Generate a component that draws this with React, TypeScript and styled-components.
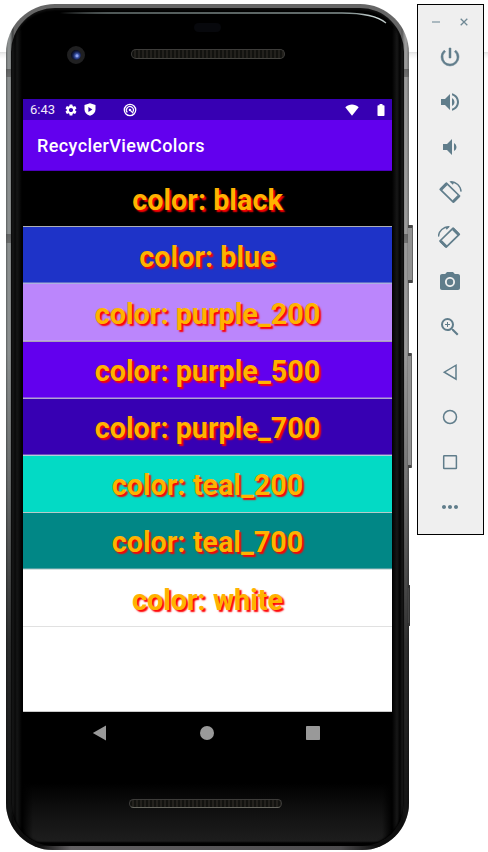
import React from "react";
import styled, { createGlobalStyle } from "styled-components";
import {
  MdPowerSettingsNew,
  MdVolumeUp,
  MdVolumeDown,
  MdPhotoCamera,
  MdZoomIn,
  MdMoreHoriz,
  MdSettings,
} from "react-icons/md";

const GlobalStyle = createGlobalStyle`
  * { box-sizing: border-box; }
  body { margin: 0; background: #fff; overflow: hidden; font-family: Roboto, sans-serif; }
`;

const Desktop = styled.main`
  display: flex;
  align-items: flex-start;
  gap: 8px;
  width: 488px;
  height: 852px;
  padding: 4px 4px 2px 6px;
  background: linear-gradient(#fff 52px, #dedede 52px, #efefef 54px, #fff 59px);
`;

const Phone = styled.section`
  position: relative;
  width: 403px;
  height: 846px;
  padding: 4px 5px 4px;
  border-radius: 49px 49px 47px 47px;
  background:
    linear-gradient(transparent 65px, #4449 65px, #5559 73px, transparent 73px, transparent 230px, #4449 230px, #5559 239px, transparent 239px),
    linear-gradient(90deg, #5c5f5f 0, #8b8f8f 2px, #8b8f8f 4px, #3a3b3b 7px, #666 8px, #666 395px, #555 396px, #888 398px, #a0a0a0 400px, #6b6b6b 403px);
  background-color: #555;

  &::before {
    content: "";
    position: absolute;
    inset: 0;
    border-radius: inherit;
    background:
      linear-gradient(90deg, transparent 32px, #626062 65px, #4c4b4d 335px, transparent 372px) bottom / 100% 4px no-repeat,
      linear-gradient(transparent 350px, #00000040 480px, #000000b0 640px, #000000dc 800px);
  }
`;

const Glass = styled.div`
  position: relative;
  height: 838px;
  padding: 91px 12px 0;
  border-radius: 44px 44px 42px 42px;
  background:
    linear-gradient(90deg, #292a2a 0, #080808 4px, #151616 6px, #000 11px, transparent 22px, transparent 371px, #000 381px, #171717 386px, #030303 389px, #303030 393px),
    linear-gradient(#000 775px, #111 805px, #1d1d1d 833px, #000 835px);
  box-shadow: inset 0 2px 2px #111, inset 0 0 2px 1px #000;
`;

const Highlight = styled.svg`
  position: absolute;
  left: 49px;
  top: 3px;
  width: 332px;
  height: 14px;
`;

const Camera = styled.span`
  position: absolute;
  left: 56px;
  top: 38px;
  width: 18px;
  height: 18px;
  border: 4px solid #202021;
  border-radius: 50%;
  background: radial-gradient(circle at 60% 58%, #8ea2ef 0 1px, #3c55a8 2px, #141f4d 4px, #080b19 6px);
`;

const Sensor = styled.span`
  position: absolute;
  left: 183px;
  top: 15px;
  width: 27px;
  height: 9px;
  border-radius: 5px;
  background: #07080c;
`;

const Speaker = styled.span<{ $bottom?: boolean }>`
  position: absolute;
  left: ${({ $bottom }) => ($bottom ? 118 : 120)}px;
  top: ${({ $bottom }) => ($bottom ? 791 : 41)}px;
  width: ${({ $bottom }) => ($bottom ? 153 : 154)}px;
  height: ${({ $bottom }) => ($bottom ? 9 : 10)}px;
  border: 1px solid #3d3c3a;
  border-bottom-color: ${({ $bottom }) => ($bottom ? "#66665f" : "#464541")};
  border-radius: 5px;
  background: repeating-linear-gradient(90deg, #12120f 0 2px, #23211d 2px 4px);
`;

const SideKey = styled.span<{ $top: number; $height: number; $dark?: boolean }>`
  position: absolute;
  left: 402px;
  top: ${({ $top }) => $top}px;
  width: ${({ $dark, $height }) => ($dark ? 2 : $height > 80 ? 4 : 5)}px;
  height: ${({ $height }) => $height}px;
  border: solid ${({ $dark }) => ($dark ? "#333" : "#444")};
  border-width: 3px 1px 3px 0;
  border-right-color: ${({ $dark }) => ($dark ? "#333" : "#666")};
  border-radius: 0 1px 1px 0;
  background: ${({ $dark }) => ($dark ? "#444" : "#929292")};
`;

const Screen = styled.div`
  display: flex;
  flex-direction: column;
  width: 369px;
  height: 655px;
  background: #000;
`;

const StatusBar = styled.header`
  display: flex;
  align-items: center;
  height: 21px;
  padding: 0 7px;
  background: #3700b3;
  color: #fff;
`;

const Clock = styled.time`
  width: 34px;
  font-size: 13px;
  line-height: 22px;
  color: #f1ebfa;
`;

const StatusIcon = styled.span<{ $gap: number }>`
  display: flex;
  margin-left: ${({ $gap }) => $gap}px;
`;

const StatusEnd = styled.div`
  display: flex;
  align-items: center;
  gap: 18px;
  margin-left: auto;
`;

const AppBar = styled.div`
  height: 51px;
  padding-left: 14px;
  background: #6200ee;
  color: #fff;
  font-size: 18px;
  font-weight: 500;
  line-height: 52px;
  letter-spacing: 0.4px;
  border-bottom: 1px solid #4d00bd;
`;

const ColorList = styled.ul`
  flex: 1;
  margin: 0;
  padding: 0;
  list-style: none;
  background: #fff;
  border-bottom: 1px solid #c9c9c9;
`;

const ColorRow = styled.li<{ $fill: string; $height: number; $line: string; $soft: boolean; $leading: number }>`
  height: ${({ $height }) => $height}px;
  border-bottom: 1px solid ${({ $line }) => $line};
  background: ${({ $fill }) => $fill};
  box-shadow: ${({ $soft }) => ($soft ? "inset 0 -1px #c8c8d266" : "none")};
  color: #ffb300;
  font-size: 28.8px;
  font-weight: 700;
  line-height: ${({ $leading }) => $leading}px;
  text-align: center;
  text-shadow: 2px 2px 1.5px #f00;
`;

const NavBar = styled.nav`
  display: flex;
  justify-content: space-between;
  align-items: center;
  height: 42px;
  padding: 0 72px 0 69px;
`;

const ToolPanel = styled.aside`
  display: flex;
  flex-direction: column;
  align-items: center;
  width: 67px;
  height: 531px;
  border: 1px solid #000;
  background: #efefef;
  color: #607d8b;
`;

const WindowControls = styled.div`
  display: flex;
  justify-content: center;
  align-items: center;
  gap: 20px;
  width: 100%;
  height: 33px;
  padding-right: 1px;
`;

const Tool = styled.button`
  display: flex;
  align-items: center;
  justify-content: center;
  width: 45px;
  height: 45px;
  flex: none;
  padding: 0;
  border: 0;
  background: none;
  color: inherit;
`;

const ToolStack = styled.div`
  display: flex;
  flex-direction: column;
  margin: -4px 2px 0 0;
`;

const PowerIcon = styled(MdPowerSettingsNew)`
  path:last-of-type {
    stroke: currentColor;
    stroke-width: 0.5px;
  }
`;

const rows = [
  { name: "black", fill: "#000000", height: 56, line: "#aeb0b5", soft: false, leading: 58 },
  { name: "blue", fill: "#1e33c8", height: 57, line: "#aab1df", soft: true, leading: 60 },
  { name: "purple_200", fill: "#bb86fc", height: 58, line: "#a9a0b8", soft: true, leading: 60 },
  { name: "purple_500", fill: "#6200ee", height: 57, line: "#b0a3d0", soft: true, leading: 58 },
  { name: "purple_700", fill: "#3700b3", height: 57, line: "#b0cfda", soft: true, leading: 58 },
  { name: "teal_200", fill: "#03dac5", height: 57, line: "#b7cbc9", soft: false, leading: 58 },
  { name: "teal_700", fill: "#018786", height: 57, line: "#d5dfdf", soft: true, leading: 58 },
  { name: "white", fill: "#ffffff", height: 57, line: "#e1e1e1", soft: false, leading: 60 },
];

const Rotate = ({ right = false }: { right?: boolean }) => (
  <svg width="24" height="24" viewBox="0 0 24 24" fill="none">
    <g transform={right ? "matrix(-1 0 0 1 23.5 0)" : undefined}>
      <path d="M2.2 9.300 8.400 3.200 21.600 16 15.300 22.200Z" stroke="currentColor" strokeWidth="1.700" strokeLinejoin="round" />
      <path d="m3 9.400 5.500-5.500M15.300 21.400l5.500-5.500" stroke="currentColor" strokeWidth="2.800" />
      <path d="M12.500 1.700C18 1.500 22.800 6 23.100 11.600" stroke="currentColor" strokeWidth="1.400" />
      <path d="m11.400 1.200 5 .9-1.600 2.700Z" fill="currentColor" />
    </g>
  </svg>
);

const Outline = ({ children }: { children: React.ReactNode }) => (
  <svg width="24" height="24" viewBox="0 0 24 24" fill="none" stroke="currentColor" strokeWidth="1.5">
    {children}
  </svg>
);

const tools = [
  { label: "Power", icon: <PowerIcon size={24} /> },
  { label: "Volume up", icon: <MdVolumeUp size={24} /> },
  { label: "Volume down", icon: <MdVolumeDown size={24} /> },
  { label: "Rotate left", icon: <Rotate /> },
  { label: "Rotate right", icon: <Rotate right /> },
  { label: "Camera", icon: <MdPhotoCamera size={24} /> },
  { label: "Zoom", icon: <MdZoomIn size={24} /> },
  { label: "Back", icon: <Outline><path d="M18 5.200v14L6.300 12.200Z" /></Outline> },
  { label: "Home", icon: <Outline><circle cx="12" cy="12" r="6.500" /></Outline> },
  { label: "Overview", icon: <Outline><rect x="5.700" y="5.700" width="12.700" height="12.700" rx=".5" /></Outline> },
  { label: "More", icon: <MdMoreHoriz size={24} /> },
];

export default function App() {
  return (
    <>
      <GlobalStyle />
      <Desktop>
        <Phone>
          <SideKey $top={221} $height={58} />
          <SideKey $top={349} $height={115} />
          <SideKey $top={581} $height={41} $dark />
          <Glass>
            <Highlight viewBox="0 0 332 14" fill="none">
              <defs>
                <linearGradient id="edge-light" gradientUnits="userSpaceOnUse" x1="0" y1="0" x2="332" y2="0">
                  <stop stopColor="#b6c5c5" stopOpacity="0" />
                  <stop offset=".15" stopColor="#687473" />
                  <stop offset=".88" stopColor="#879493" />
                  <stop offset=".96" stopColor="#d6e2e1" />
                  <stop offset="1" stopColor="#909998" />
                </linearGradient>
              </defs>
              <path d="M0 2H282Q314 2 326 12" stroke="url(#edge-light)" strokeWidth="1.3" />
            </Highlight>
            <Camera />
            <Sensor />
            <Speaker />
            <Screen>
              <StatusBar>
                <Clock>6:43</Clock>
                <StatusIcon $gap={0}><MdSettings size={14} /></StatusIcon>
                <StatusIcon $gap={6}>
                  <svg width="12" height="13" viewBox="0 0 12 13">
                    <path fill="#fff" fillRule="evenodd" d="M6 .3 11.500 2v4.600c0 3-2 5-5.500 6.200C2.500 11.600.5 9.600.5 6.600V2ZM4.400 3.900v5l4-2.500Z" />
                  </svg>
                </StatusIcon>
                <StatusIcon $gap={27}>
                  <svg width="14" height="14" viewBox="0 0 14 14" fill="none" stroke="#fff">
                    <circle cx="7" cy="7" r="5.700" strokeWidth="1.300" />
                    <path d="M4.300 9.500A3.500 3.500 0 1 1 9.800 9" strokeWidth="1.200" />
                    <path d="m6 6 4.300 4.400M6 7.800l2-1.500" strokeWidth="1.200" />
                  </svg>
                </StatusIcon>
                <StatusEnd>
                  <svg width="14" height="12" viewBox="0 0 14 12">
                    <path fill="#fff" d="M.3 3.200C4.300-.3 9.700-.3 13.700 3.200L7 11.700Z" />
                  </svg>
                  <svg width="8" height="12" viewBox="0 0 8 12">
                    <path fill="#fff" d="M2.500 0h3v1.200h1.300q.7 0 .7.700v9.400q0 .7-.7.700H1.200q-.7 0-.7-.7V1.900q0-.7.7-.7h1.300Z" />
                  </svg>
                </StatusEnd>
              </StatusBar>
              <AppBar>RecyclerViewColors</AppBar>
              <ColorList>
                {rows.map(({ name, fill, height, line, soft, leading }) => (
                  <ColorRow key={name} $fill={fill} $height={height} $line={line} $soft={soft} $leading={leading}>
                    color: {name}
                  </ColorRow>
                ))}
              </ColorList>
              <NavBar>
                <svg width="15" height="16" viewBox="0 0 15 16"><path d="M14 .5v15L.8 8Z" fill="#999" /></svg>
                <svg width="14" height="14"><circle cx="7" cy="7" r="7" fill="#999" /></svg>
                <svg width="14" height="14"><rect width="14" height="14" rx=".7" fill="#999" /></svg>
              </NavBar>
            </Screen>
            <Speaker $bottom />
          </Glass>
        </Phone>
        <ToolPanel>
          <WindowControls>
            <svg width="8" height="8" viewBox="0 0 8 8"><path d="M0 4h8" stroke="#8fa3ad" strokeWidth="1.400" /></svg>
            <svg width="8" height="8" viewBox="0 0 8 8"><path d="m.7.7 6.600 6.600M7.300.7.7 7.300" stroke="#708995" strokeWidth="1.300" /></svg>
          </WindowControls>
          <ToolStack>
            {tools.map(({ label, icon }) => (
              <Tool key={label} aria-label={label}>{icon}</Tool>
            ))}
          </ToolStack>
        </ToolPanel>
      </Desktop>
    </>
  );
}
